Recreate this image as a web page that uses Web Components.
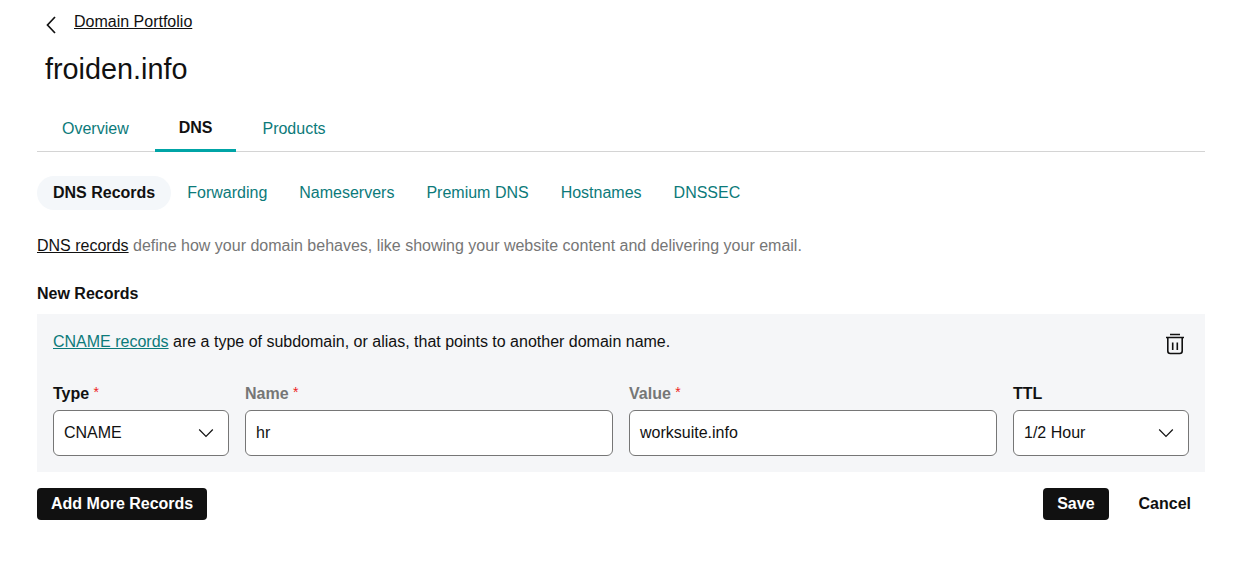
<!DOCTYPE html>
<html>
<head>
<meta charset="utf-8">
<title>froiden.info</title>
<style>
body { margin: 0; background: #fff; font-family: "Liberation Sans", Arial, sans-serif; color: #111; }
</style>
</head>
<body>
<dns-page></dns-page>
<script>
const pageTemplate = document.createElement('template');
pageTemplate.innerHTML = `<style>
:host { display: block; padding: 0 38px 0 37px; font-size: 16px; line-height: 24px; }
.intro { margin: 24px 0 0; color: #767676; height: 24px; }
.intro a { color: #111; }
h2 { margin: 24px 0 0; font-size: 16px; line-height: 24px; font-weight: 700; height: 24px; }
</style>
<page-header></page-header>
<main-tabs></main-tabs>
<sub-nav></sub-nav>
<p class="intro"><a href="#">DNS records</a> define how your domain behaves, like showing your website content and delivering your email.</p>
<h2>New Records</h2>
<record-panel></record-panel>
<form-actions></form-actions>`;

class DnsPage extends HTMLElement {
    constructor() {
        super();
        this.attachShadow({ mode: 'open' }).appendChild(pageTemplate.content.cloneNode(true));
    }
}

class PageHeader extends HTMLElement {
    constructor() {
        super();
        this.attachShadow({ mode: 'open' }).innerHTML = `<style>
:host { display: block; padding: 10px 0 0 8px; }
.back { display: flex; height: 24px; }
svg { margin: 2px 10px 0 0; }
a { color: #111; }
h1 { margin: 15px 0 0; font-size: 28.8px; line-height: 40px; font-weight: 400; color: #111; }
</style>
<div class="back">
  <svg width="11" height="24" viewBox="0 0 11 24" fill="none" stroke="#111" stroke-width="1.7"><path d="M10 5 L2.5 13 L10 21"/></svg>
  <a href="#" style="margin-left:8px">Domain Portfolio</a>
</div>
<h1>froiden.info</h1>`;
    }
}

class MainTabs extends HTMLElement {
    constructor() {
        super();
        this.attachShadow({ mode: 'open' }).innerHTML = `<style>
:host { display: flex; margin-top: 14px; height: 48px; border-bottom: 1px solid #d4d4d4; box-sizing: content-box; }
a { display: block; height: 48px; box-sizing: border-box; padding: 14px 26px 0 25px; color: #0c7a7a; text-decoration: none; }
a.on { color: #111; font-weight: 700; border-bottom: 3px solid #00a4a6; padding: 13px 24px 0; margin-bottom: -1px; height: 49px; }
</style>
<a href="#">Overview</a><a href="#" class="on">DNS</a><a href="#" style="padding-left:26px">Products</a>`;
    }
}

class SubNav extends HTMLElement {
    constructor() {
        super();
        this.attachShadow({ mode: 'open' }).innerHTML = `<style>
:host { display: flex; margin-top: 24px; }
a { display: block; height: 34px; line-height: 34px; padding: 0 16px; border-radius: 17px; color: #0c7a7a; text-decoration: none; }
a.on { color: #111; font-weight: 700; background: #f4f7fa; }
</style>
<a href="#" class="on">DNS Records</a><a href="#">Forwarding</a><a href="#">Nameservers</a><a href="#">Premium DNS</a><a href="#">Hostnames</a><a href="#">DNSSEC</a>`;
    }
}

class RecordPanel extends HTMLElement {
    constructor() {
        super();
        this.attachShadow({ mode: 'open' }).innerHTML = `<style>
:host { display: block; margin-top: 8px; background: #f5f6f8; padding: 16px; height: 158px; box-sizing: border-box; }
.top { display: flex; justify-content: space-between; height: 24px; }
.top a { color: #0c7a7a; }
.top svg { margin: 3px 4px 0 0; }
.fields { display: grid; grid-template-columns: 176px 368px 368px 176px; gap: 16px; margin-top: 28px; }
</style>
<div class="top">
  <div><a href="#">CNAME records</a> are a type of subdomain, or alias, that points to another domain name.</div>
  <svg width="20" height="22" viewBox="0 0 20 22" fill="none" stroke="#111" stroke-width="1.6">
    <path d="M1 4.5 H19 M5 1.5 H15 M2.8 4.5 V18 Q2.8 20.5 5.3 20.5 H14.7 Q17.2 20.5 17.2 18 V4.5 M7.7 9.5 V17 M12.3 9.5 V17"/>
  </svg>
</div>
<div class="fields">
  <record-field label="Type" value="CNAME" required select></record-field>
  <record-field label="Name" value="hr" required muted></record-field>
  <record-field label="Value" value="worksuite.info" required muted></record-field>
  <record-field label="TTL" value="1/2 Hour" select></record-field>
</div>`;
    }
}

class RecordField extends HTMLElement {
    constructor() {
        super();
        this.attachShadow({ mode: 'open' });
    }
    connectedCallback() {
        const muted = this.hasAttribute('muted');
        const star = this.hasAttribute('required') ? ' <span class="star">*</span>' : '';
        const chevron = this.hasAttribute('select')
            ? '<svg width="16" height="10" viewBox="0 0 16 10" fill="none" stroke="#111" stroke-width="1.2"><path d="M1.2 1.5 L8 8.3 L14.8 1.5"/></svg>'
            : '';
        this.shadowRoot.innerHTML = `<style>
:host { display: block; }
label { display: block; height: 24px; font-weight: 700; color: ${muted ? '#767676' : '#111'}; margin-bottom: 4px; }
.star { color: #ee2222; font-weight: 400; font-size: 14px; line-height: 0; vertical-align: 2px; }
.box { display: flex; align-items: center; justify-content: space-between; height: 46px; box-sizing: border-box; padding: 0 14px 0 10px; background: #fff; border: 1px solid #767676; border-radius: 6px; }
</style>
<label>${this.getAttribute('label')}${star}</label>
<div class="box"><span>${this.getAttribute('value')}</span>${chevron}</div>`;
    }
}

class FormActions extends HTMLElement {
    constructor() {
        super();
        this.attachShadow({ mode: 'open' }).innerHTML = `<style>
:host { display: flex; align-items: center; margin-top: 16px; }
.right { margin-left: auto; display: flex; align-items: center; }
</style>
<app-button>Add More Records</app-button>
<div class="right">
  <app-button>Save</app-button>
  <app-button plain>Cancel</app-button>
</div>`;
    }
}

class AppButton extends HTMLElement {
    constructor() {
        super();
        this.attachShadow({ mode: 'open' }).innerHTML = `<style>
:host { display: inline-block; height: 32px; line-height: 32px; padding: 0 14px; background: #111; color: #fff; font-weight: 700; border-radius: 4px; }
:host([plain]) { background: none; color: #111; margin-left: 16px; }
</style><slot></slot>`;
    }
}

customElements.define('dns-page', DnsPage);
customElements.define('page-header', PageHeader);
customElements.define('main-tabs', MainTabs);
customElements.define('sub-nav', SubNav);
customElements.define('record-panel', RecordPanel);
customElements.define('record-field', RecordField);
customElements.define('form-actions', FormActions);
customElements.define('app-button', AppButton);
</script>
</body>
</html>
